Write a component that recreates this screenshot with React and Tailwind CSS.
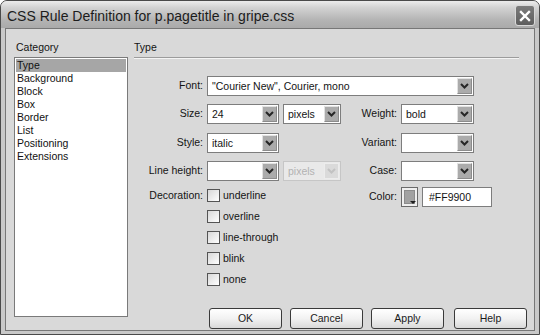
import React from "react";

function Chevron({ disabled }) {
  return (
    <svg width="9" height="6" viewBox="0 0 9 6">
      <path
        d="M1 1 L4.5 4.5 L8 1"
        fill="none"
        stroke={disabled ? "#c2c2c2" : "#262626"}
        strokeWidth="2"
      />
    </svg>
  );
}

function Select({ w, value, disabled }) {
  return (
    <div
      className={
        disabled
          ? `flex h-[20px] ${w} items-stretch border border-[#c6c6c6] bg-[#e9e9e9]`
          : `flex h-[20px] ${w} items-stretch border border-[#7d7d7d] bg-white`
      }
    >
      <div
        className={
          disabled
            ? "flex-1 truncate whitespace-pre pl-[4px] leading-[18px] text-[#b2b2b2]"
            : "flex-1 truncate whitespace-pre pl-[4px] leading-[18px] text-[#141414]"
        }
      >
        {value}
      </div>
      <div
        className={
          disabled
            ? "m-[1px] flex w-[15px] items-center justify-center border border-[#ececec] bg-[#dadada]"
            : "m-[1px] flex w-[15px] items-center justify-center border border-t-[#e2e2e2] border-l-[#e2e2e2] border-r-[#8c8c8c] border-b-[#8c8c8c] bg-[#ababab]"
        }
      >
        <Chevron disabled={disabled} />
      </div>
    </div>
  );
}

function Check({ label }) {
  return (
    <div className="flex h-[13px] items-center">
      <div className="h-[13px] w-[13px] border border-[#545454] bg-gradient-to-br from-[#d8d8d8] to-white" />
      <span className="ml-[3px] leading-[13px] text-[#141414]">{label}</span>
    </div>
  );
}

function Btn({ children, cls }) {
  return (
    <div
      className={`flex h-[21px] w-[73px] items-center justify-center rounded-[3px] border border-[#3a3a3a] bg-gradient-to-b from-white via-[#f2f2f2] to-[#d9d9d9] text-[#1a1a1a] ${cls}`}
    >
      {children}
    </div>
  );
}

const categories = [
  "Type",
  "Background",
  "Block",
  "Box",
  "Border",
  "List",
  "Positioning",
  "Extensions",
];

export default function App() {
  return (
    <div className="h-[335px] w-[540px] bg-white font-['Liberation_Sans',Arial,sans-serif] text-[10.5px]">
      <div className="flex h-[335px] w-[540px] flex-col overflow-hidden rounded-t-[7px] border border-[#4a4a4a] bg-[#c9c9c9]">
        {/* Title bar */}
        <div className="flex h-[27px] shrink-0 items-start bg-[linear-gradient(180deg,#ececec_0%,#d2d2d2_25%,#b4b4b4_70%,#aaaaaa_100%)] pl-[6px] pr-[4px]">
          <span className="flex-1 pt-[7px] text-[14px] leading-[16px] text-[#1c1c1c]">
            CSS Rule Definition for p.pagetitle in gripe.css
          </span>
          <div className="mt-[4px] flex h-[21px] w-[20px] items-center justify-center rounded-[3px] border border-[#d8d8d8] bg-gradient-to-b from-[#7c7c7c] to-[#5e5e5e]">
            <svg width="12" height="12" viewBox="0 0 12 12">
              <path d="M2 2 L10 10 M10 2 L2 10" stroke="white" strokeWidth="2.4" strokeLinecap="square" />
            </svg>
          </div>
        </div>

        {/* Body */}
        <div className="mx-[4px] mb-[3px] flex flex-1 border border-[#777777] bg-[#d9d9d9]">
          {/* Category column */}
          <div className="flex flex-col pl-[8px]">
            <div className="mt-[12px] pl-[2px] leading-[13px] text-[#141414]">Category</div>
            <div className="mt-[3px] h-[260px] w-[114px] border border-[#7a7a7a] bg-white p-[1px] pt-[1px]">
              {categories.map((c, i) => (
                <div
                  key={c}
                  className={
                    i === 0
                      ? "h-[13px] bg-[#a6a6a6] pl-[1px] leading-[13px] text-[#111]"
                      : "h-[13px] pl-[1px] leading-[13px] text-[#111]"
                  }
                >
                  {c}
                </div>
              ))}
            </div>
          </div>

          {/* Right panel */}
          <div className="ml-[6px] flex w-[393px] flex-col">
            <div className="mt-[12px] leading-[13px] text-[#141414]">Type</div>
            <div className="mt-[3px] w-[385px] border-t border-b border-t-[#9c9c9c] border-b-[#f4f4f4]" />

            {/* Font */}
            <div className="mt-[17px] flex h-[20px] items-center">
              <div className="w-[69px] text-right text-[#141414]">Font:</div>
              <div className="ml-[4px]">
                <Select w="w-[267px]" value={'"Courier New", Courier, mono'} />
              </div>
            </div>

            {/* Size / Weight */}
            <div className="mt-[8px] flex h-[20px] items-center">
              <div className="flex w-[207px] items-center">
                <div className="w-[69px] text-right text-[#141414]">Size:</div>
                <div className="ml-[4px]">
                  <Select w="w-[72px]" value="24" />
                </div>
                <div className="ml-[4px]">
                  <Select w="w-[58px]" value="pixels" />
                </div>
              </div>
              <div className="w-[56px] text-right text-[#141414]">Weight:</div>
              <div className="ml-[4px]">
                <Select w="w-[73px]" value="bold" />
              </div>
            </div>

            {/* Style / Variant */}
            <div className="mt-[9px] flex h-[20px] items-center">
              <div className="flex w-[207px] items-center">
                <div className="w-[69px] text-right text-[#141414]">Style:</div>
                <div className="ml-[4px]">
                  <Select w="w-[72px]" value="italic" />
                </div>
              </div>
              <div className="w-[56px] text-right text-[#141414]">Variant:</div>
              <div className="ml-[4px]">
                <Select w="w-[73px]" value="" />
              </div>
            </div>

            {/* Line height / Case */}
            <div className="mt-[8px] flex h-[20px] items-center">
              <div className="flex w-[207px] items-center">
                <div className="w-[69px] text-right text-[#141414]">Line height:</div>
                <div className="ml-[4px]">
                  <Select w="w-[72px]" value="" />
                </div>
                <div className="ml-[4px]">
                  <Select w="w-[58px]" value="pixels" disabled />
                </div>
              </div>
              <div className="w-[56px] text-right text-[#141414]">Case:</div>
              <div className="ml-[4px]">
                <Select w="w-[73px]" value="" />
              </div>
            </div>

            {/* Decoration / Color */}
            <div className="mt-[8px] flex items-start">
              <div className="flex w-[207px] items-start">
                <div className="w-[69px] text-right leading-[13px] text-[#141414]">Decoration:</div>
                <div className="ml-[4px] flex flex-col gap-[8px]">
                  <Check label="underline" />
                  <Check label="overline" />
                  <Check label="line-through" />
                  <Check label="blink" />
                  <Check label="none" />
                </div>
              </div>
              <div className="-mt-[2px] flex h-[20px] items-center">
                <div className="w-[56px] text-right text-[#141414]">Color:</div>
                <div className="relative ml-[4px] h-[20px] w-[17px] border border-[#6a6a6a] bg-[#efefef] p-[2px]">
                  <div className="h-full w-full border border-[#8c8c8c] bg-[#a2a2a2]" />
                  <svg className="absolute bottom-[1px] right-[1px]" width="6" height="4" viewBox="0 0 6 4">
                    <path d="M0 0 H6 L3 3 Z" fill="#1e1e1e" />
                  </svg>
                </div>
                <div className="ml-[4px] h-[20px] w-[70px] border border-[#7d7d7d] bg-white pl-[6px] leading-[18px] text-[#141414]">
                  #FF9900
                </div>
              </div>
            </div>

            {/* Buttons */}
            <div className="mb-[1px] mt-auto flex">
              <Btn cls="ml-[75px]">OK</Btn>
              <Btn cls="ml-[8px]">Cancel</Btn>
              <Btn cls="ml-[8px]">Apply</Btn>
              <Btn cls="ml-[10px]">Help</Btn>
            </div>
          </div>
        </div>
      </div>
    </div>
  );
}
